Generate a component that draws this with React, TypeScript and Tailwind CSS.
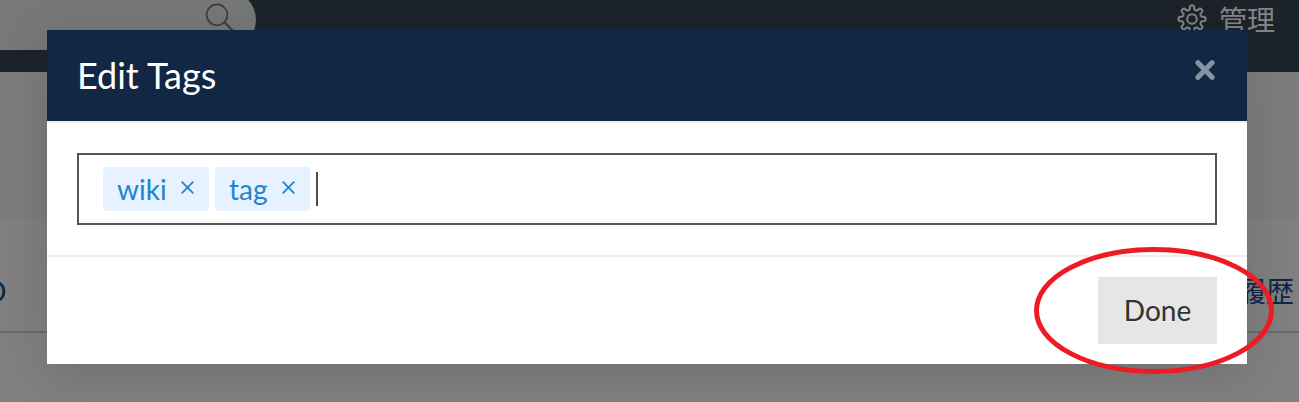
function SearchIcon() {
  return (
    <svg className="h-8 w-8" viewBox="0 0 32 32" fill="none" stroke="#3d3e40" strokeWidth="1.6">
      <circle cx="13" cy="14.8" r="10.4" />
      <path d="M20.3 22 31 33" strokeWidth="2.2" />
    </svg>
  );
}

function GearIcon() {
  const points: string[] = [];
  const n = 8;
  for (let i = 0; i < n * 24; i++) {
    const a = (i / (n * 24)) * Math.PI * 2;
    const wave = Math.tanh(2.4 * Math.cos(n * a)) / Math.tanh(2.4);
    const r = 11.5 + 2 * wave;
    points.push(`${(15 + r * Math.sin(a)).toFixed(2)},${(15 - r * Math.cos(a)).toFixed(2)}`);
  }
  return (
    <svg className="h-[30px] w-[30px]" viewBox="0 0 30 30" fill="none" stroke="#858585" strokeWidth="2" strokeLinejoin="round">
      <polygon points={points.join(" ")} />
      <circle cx="15" cy="15" r="4.8" />
    </svg>
  );
}

function Tag({ label, width }: { label: string; width: string }) {
  return (
    <span className={`flex h-11 items-center justify-between rounded-[4px] bg-[#e6f2ff] pl-[14px] pr-[14px] text-[28px] leading-none text-[#2185d0] ${width}`}>
      <span>{label}</span>
      <svg className="-mt-[3px] h-[15px] w-[15px]" viewBox="0 0 15 15" stroke="#2185d0" strokeWidth="1.8">
        <path d="M1.7 1.7 13.3 13.3M13.3 1.7 1.7 13.3" />
      </svg>
    </span>
  );
}

function Page() {
  return (
    <div className="flex h-full flex-col bg-[#808080]">
      <header className="flex h-[72px] items-start justify-between bg-[#1c232b]">
        <div className="h-[50px] w-64 overflow-hidden">
          <div className="-mt-[10px] flex h-[60px] items-start justify-end rounded-r-full bg-[#777978] pr-[20px] pt-[10px]">
            <SearchIcon />
          </div>
        </div>
        <div className="flex items-start gap-3 pr-6 text-[28px] text-[#858585]">
          <span className="pt-[4px]">
            <GearIcon />
          </span>
          <span className="pt-[2px] leading-[36px]">管理</span>
        </div>
      </header>
      <div className="h-[146px] bg-[#7d7d7d]" />
      <nav className="flex h-[115px] items-center justify-between overflow-hidden border-b-2 border-[#6a6a6a] pr-[5px] pt-[33px] text-[28px] text-[#0e2747]">
        <span className="-ml-[16px]">O</span>
        <span>履歴</span>
      </nav>
    </div>
  );
}

export default function App() {
  return (
    <div className="relative h-[402px] w-[1299px] overflow-hidden" style={{ fontFamily: 'Lato, "Noto Sans CJK JP", sans-serif' }}>
      <Page />
      <section className="absolute left-[47px] top-[30px] flex h-[334px] w-[1200px] flex-col bg-white shadow-[0_10px_50px_rgba(0,0,0,0.14)]">
        <div className="flex h-[91px] items-start justify-between bg-[#122743] pl-[30px] pr-[32px] text-white">
          <h1 className="pt-[23px] text-[36px] leading-[44px]">Edit Tags</h1>
          <svg className="mt-[29px] h-[22px] w-[20px]" viewBox="0 0 20 22" stroke="#8893a1" strokeWidth="5.2" strokeLinecap="round">
            <path d="M3 3.7 17 18.3M17 3.7 3 18.3" />
          </svg>
        </div>
        <div className="h-[136px] border-b-2 border-t-2 border-[#eeeeee] px-[30px] pt-[30px]">
          <div className="flex h-[72px] items-center gap-[6px] border-2 border-[#555555] pl-6">
            <Tag label="wiki" width="w-[106px]" />
            <Tag label="tag" width="w-[95px]" />
            <span className="h-[34px] w-[2px] bg-[#4d4d4d]" />
          </div>
        </div>
        <footer className="flex flex-1 items-start justify-end pr-[30px] pt-5">
          <button className="h-[67px] w-[119px] bg-[#e6e6e6] pb-[2px] text-[28px] text-[#333333]">Done</button>
        </footer>
      </section>
      <svg className="absolute left-[1030px] top-[242px] h-[136px] w-[250px]" viewBox="0 0 250 136" fill="none" stroke="#ed1c24" strokeWidth="5">
        <ellipse cx="124" cy="68.5" rx="117.5" ry="61" />
      </svg>
    </div>
  );
}
